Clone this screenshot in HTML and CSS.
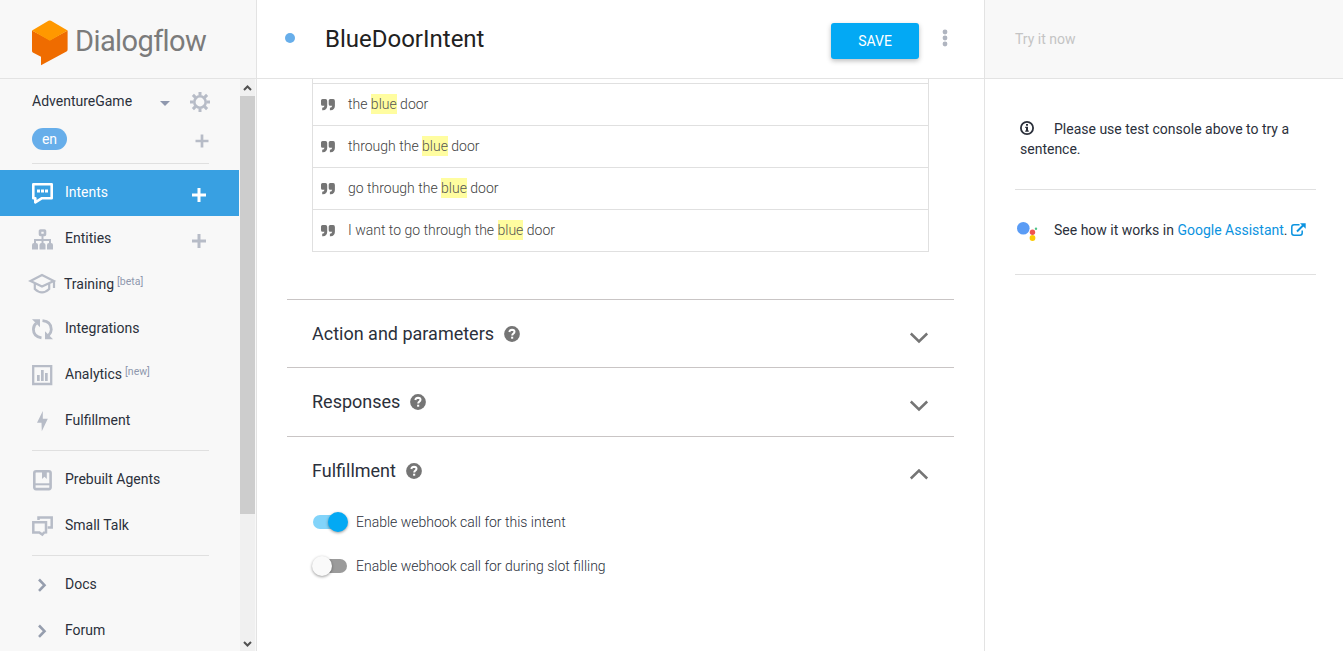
FILE: index.html
```html
<!DOCTYPE html>
<html lang="en">
<head>
<meta charset="utf-8">
<title>Dialogflow</title>
<link rel="stylesheet" href="styles.css">
</head>
<body>
<div class="app">
  <aside class="sidebar">
    <div class="brand">
      <svg class="brand-mark" width="36" height="46" viewBox="0 0 36 46"><path fill="#ef6c00" d="M0 10.5V31q0 1 .8 1.4L9 36.8V45.200L34.500 31.500Q35.600 30.800 35.600 29.500V10.500L18 20z"/><path fill="#ff9800" d="M0 10.500L16.500.8Q17.800.200 19 .8L35.600 10.500 17.800 20.700z"/></svg>
      <span class="brand-name">Dialogflow</span>
    </div>
    <div class="side-body">
      <div class="side-content">
        <div class="agent">
          <span class="agent-name">AdventureGame</span>
          <svg class="caret" width="10" height="5" viewBox="0 0 10 5"><path fill="#8f98ae" d="M0 0h10L5 5z"/></svg>
          <svg class="gear" width="20" height="20" viewBox="-10 -10 20 20" fill="none" stroke="#b7bcc7"><circle r="5.700" stroke-width="2.600"/><g stroke-width="3"><path d="M0-6.500V-10M0 6.500V10M-6.500 0H-10M6.500 0H10M-4.600-4.600l-2.500-2.500M4.600 4.600l2.500 2.500M-4.600 4.600l-2.500 2.500M4.600-4.600l2.500-2.500"/></g></svg>
        </div>
        <div class="lang">
          <span class="badge">en</span>
          <svg width="14" height="14" viewBox="0 0 14 14"><path d="M7 .5v13M.5 7h13" stroke="#b7bcc7" stroke-width="2.700"/></svg>
        </div>
        <hr>
        <nav>
          <a class="item active"><svg class="ico" viewBox="0 0 24 24"><path fill="none" stroke="#fff" stroke-width="2.600" stroke-linejoin="round" d="M3.300 3.300h18.400v13.900H12l-6.700 4.200v-4.200h-2z"/><path fill="#fff" d="M7 8.500h3v3H7zM11 8.500h3v3h-3zM15 8.500h3v3h-3z"/></svg><span>Intents</span><svg class="add" viewBox="0 0 14 14"><path d="M7 0v14M0 7h14"/></svg></a>
          <a class="item"><svg class="ico" viewBox="0 0 24 24"><path fill="none" stroke="#b7bcc7" stroke-width="2" d="M12.500 9v8M5 17v-4h15v4"/><rect x="10" y="3.500" width="5" height="4.500" rx=".5" fill="none" stroke="#b7bcc7" stroke-width="2.600"/><path fill="#b7bcc7" d="M2 18q0-2 2-2h2q2 0 2 2v4.500H2zM9.500 18q0-2 2-2h2q2 0 2 2v4.500h-6zM17 18q0-2 2-2h2q2 0 2 2v4.500h-6z"/></svg><span>Entities</span><svg class="add" viewBox="0 0 14 14"><path d="M7 0v14M0 7h14"/></svg></a>
          <a class="item training"><svg class="ico" viewBox="0 0 24 24" fill="none" stroke="#b7bcc7" stroke-width="2.200"><path d="M.5 9L12 3l11.800 6L12 14.500zM24 8.500v7.500M4.800 11.500V17Q12 23.800 19.200 17v-5.500"/></svg><span>Training<sup>[beta]</sup></span></a>
          <a class="item"><svg class="ico" viewBox="0 0 24 24"><path fill="none" stroke="#b7bcc7" stroke-width="2.800" d="M12.500 3.700Q21.300 4.500 21.300 12.500 21.200 16 18.500 18.500M11.500 20.800Q3.400 19.500 3.400 12.200 3.500 8.500 6.300 6.200"/><path fill="#b7bcc7" d="M2 2.200h8v8zM23 22.300h-8v-8z"/></svg><span>Integrations</span></a>
          <a class="item"><svg class="ico" viewBox="0 0 24 24"><path fill="none" stroke="#b7bcc7" stroke-width="2.300" d="M3.200 3.200h18v17.800h-18z"/><path fill="#b7bcc7" d="M7 12h2.700v6H7zM11 7h2.700v11H11zM15 10h2.700v8H15z"/></svg><span>Analytics<sup>[new]</sup></span></a>
          <a class="item"><svg class="ico" viewBox="0 0 24 24"><path fill="#b7bcc7" d="M12.800 2L7 13.800h4.500L11.800 22.200 17.800 9.800h-5z"/></svg><span>Fulfillment</span></a>
          <hr>
          <a class="item"><svg class="ico" viewBox="0 0 24 24"><rect x="4.300" y="3.300" width="16.300" height="17.800" rx="1.800" fill="none" stroke="#b7bcc7" stroke-width="2.600"/><path fill="none" stroke="#b7bcc7" stroke-width="2" d="M4.500 16.300h16"/><path fill="#b7bcc7" d="M12 3h4.800v8l-2.400-2.200L12 11z"/></svg><span>Prebuilt Agents</span></a>
          <a class="item"><svg class="ico" viewBox="0 0 24 24" fill="none" stroke="#b7bcc7" stroke-width="2.500"><path d="M8.500 6V3.400h13.200v10h-4M3.300 8.200H16v10.200l-2 .2-1.700 2-3-2.200h-6z"/></svg><span>Small Talk</span></a>
          <hr>
          <a class="item"><svg class="ico" viewBox="0 0 24 24"><path fill="none" stroke="#969eae" stroke-width="2.600" d="M9 6.500l5.500 5.700L9 17.900"/></svg><span>Docs</span></a>
          <a class="item"><svg class="ico" viewBox="0 0 24 24"><path fill="none" stroke="#969eae" stroke-width="2.600" d="M9 6.500l5.500 5.700L9 17.900"/></svg><span>Forum</span></a>
        </nav>
      </div>
      <div class="scrollbar">
        <svg width="15" height="17" viewBox="0 0 15 17"><path fill="none" stroke="#505050" stroke-width="2" d="M4 11l3.500-3.500L11 11"/></svg>
        <div class="thumb"></div>
        <svg class="down" width="15" height="17" viewBox="0 0 15 17"><path fill="none" stroke="#505050" stroke-width="2" d="M4 8l3.500 3.500L11 8"/></svg>
      </div>
    </div>
  </aside>

  <main class="main">
    <header class="main-head">
      <span class="dot"></span>
      <h1>BlueDoorIntent</h1>
      <button class="save">SAVE</button>
      <svg class="more" width="6" height="18" viewBox="0 0 6 18" fill="#b0b5c0"><circle cx="3" cy="3" r="2.400"/><circle cx="3" cy="9" r="2.400"/><circle cx="3" cy="15" r="2.400"/></svg>
    </header>
    <div class="phrases">
      <div class="phrase"><svg class="quote" viewBox="0 0 14 12"><path d="M0 1.500Q0 0 1.500 0h3Q6.200 0 6.200 2v5Q6 11 2 11.300H1.200V8.800q2-.2 2.300-2H1.500Q0 6.800 0 5.300zM7.700 1.500Q7.700 0 9.200 0h3Q13.900 0 13.900 2v5q-.2 4-4.200 4.300H8.900V8.800q2-.2 2.300-2h-2q-1.500 0-1.500-1.500z"/></svg><p>the <mark>blue</mark> door</p></div>
      <div class="phrase"><svg class="quote" viewBox="0 0 14 12"><path d="M0 1.500Q0 0 1.500 0h3Q6.200 0 6.200 2v5Q6 11 2 11.300H1.200V8.800q2-.2 2.300-2H1.500Q0 6.800 0 5.300zM7.700 1.500Q7.700 0 9.200 0h3Q13.900 0 13.900 2v5q-.2 4-4.200 4.300H8.900V8.800q2-.2 2.300-2h-2q-1.500 0-1.500-1.500z"/></svg><p>through the <mark>blue</mark> door</p></div>
      <div class="phrase"><svg class="quote" viewBox="0 0 14 12"><path d="M0 1.500Q0 0 1.500 0h3Q6.200 0 6.200 2v5Q6 11 2 11.300H1.200V8.800q2-.2 2.300-2H1.500Q0 6.800 0 5.300zM7.700 1.500Q7.700 0 9.200 0h3Q13.900 0 13.900 2v5q-.2 4-4.200 4.300H8.900V8.800q2-.2 2.300-2h-2q-1.500 0-1.500-1.500z"/></svg><p>go through the <mark>blue</mark> door</p></div>
      <div class="phrase"><svg class="quote" viewBox="0 0 14 12"><path d="M0 1.500Q0 0 1.500 0h3Q6.200 0 6.200 2v5Q6 11 2 11.300H1.200V8.800q2-.2 2.300-2H1.500Q0 6.800 0 5.300zM7.700 1.500Q7.700 0 9.200 0h3Q13.900 0 13.900 2v5q-.2 4-4.200 4.300H8.900V8.800q2-.2 2.300-2h-2q-1.500 0-1.500-1.500z"/></svg><p>I want to go through the <mark>blue</mark> door</p></div>
    </div>
    <section class="panel first">
      <h2>Action and parameters</h2><svg class="help" viewBox="0 0 16 16"><circle cx="8" cy="8" r="7.900" fill="#757575"/><path fill="none" stroke="#fff" stroke-width="2" d="M5.300 6Q5.800 3.800 8 3.800q2.500.1 2.500 2 0 1.100-1.200 1.900Q8.200 8.300 8.200 9.600"/><path fill="#fff" d="M7.100 10.700h2.100v2H7.100z"/></svg>
      <svg class="chev" viewBox="0 0 20 12"><path d="M1.800 1.500L10 9.500l8.200-8"/></svg>
    </section>
    <section class="panel">
      <h2>Responses</h2><svg class="help" viewBox="0 0 16 16"><circle cx="8" cy="8" r="7.900" fill="#757575"/><path fill="none" stroke="#fff" stroke-width="2" d="M5.300 6Q5.800 3.800 8 3.800q2.500.1 2.500 2 0 1.100-1.200 1.900Q8.200 8.300 8.200 9.600"/><path fill="#fff" d="M7.100 10.700h2.100v2H7.100z"/></svg>
      <svg class="chev" viewBox="0 0 20 12"><path d="M1.800 1.500L10 9.500l8.200-8"/></svg>
    </section>
    <section class="panel">
      <h2>Fulfillment</h2><svg class="help" viewBox="0 0 16 16"><circle cx="8" cy="8" r="7.900" fill="#757575"/><path fill="none" stroke="#fff" stroke-width="2" d="M5.300 6Q5.800 3.800 8 3.800q2.500.1 2.500 2 0 1.100-1.200 1.900Q8.200 8.300 8.200 9.600"/><path fill="#fff" d="M7.100 10.700h2.100v2H7.100z"/></svg>
      <svg class="chev" viewBox="0 0 20 12"><path d="M1.800 9.500L10 1.500l8.200 8"/></svg>
    </section>
    <div class="switches">
      <label class="switch on"><span class="track"><span class="knob"></span></span>Enable webhook call for this intent</label>
      <label class="switch"><span class="track"><span class="knob"></span></span>Enable webhook call for during slot filling</label>
    </div>
  </main>

  <aside class="console">
    <header class="console-head">Try it now</header>
    <div class="note">
      <p><svg class="info" width="14" height="14" viewBox="0 0 14 14"><circle cx="7" cy="7" r="6.100" fill="none" stroke="#2b303b" stroke-width="1.800"/><path fill="#2b303b" d="M6 3h2v1.700H6zM5.200 5.700H8v3.800h.8v1.200H5.200V9.500H6V7h-.8z"/></svg>Please use test console above to try a sentence.</p>
    </div>
    <div class="assistant">
      <svg width="22" height="20" viewBox="0 0 22 20"><circle cx="6.300" cy="6.300" r="6.300" fill="#5a9cf5"/><circle cx="15.500" cy="10.200" r="2.700" fill="#ef5350"/><circle cx="15.500" cy="16" r="2.900" fill="#fbcb05"/><circle cx="19" cy="6.800" r="1.200" fill="#4fc38a"/></svg>
      <p>See how it works in <a>Google Assistant</a>. <svg class="ext" width="15" height="13" viewBox="0 0 15 13"><path fill="none" stroke="#0b93e0" stroke-width="1.500" d="M8.500 1.800H3Q.8 1.800.8 4v6Q.8 12.200 3 12.200h6q2.200 0 2.200-2.200V7.500"/><path fill="none" stroke="#0b93e0" stroke-width="2" d="M6 8.500l6.500-6.500"/><path fill="#0b93e0" d="M9 .2h5.700v5.600z"/></svg></p>
    </div>
  </aside>
</div>
</body>
</html>
```
FILE: styles.css
```css
* { box-sizing: border-box; }
body { margin: 0; font: 14px/20px Roboto, "Liberation Sans", sans-serif; color: #2b303b; background: #fff; overflow: hidden; }
h1, h2, p { margin: 0; font-weight: 400; }
svg { flex: none; display: block; }
hr { border: 0; height: 1px; background: #e0e0e0; margin: 6px 31px 6px 32px; }
.app { display: grid; grid-template-columns: 257px 728px 358px; height: 651px; }

/* Sidebar */
.sidebar { display: flex; flex-direction: column; height: 651px; background: #f8f8f8; border-right: 1px solid #e3e3e3; overflow: hidden; }
.brand { display: flex; flex: none; align-items: flex-start; height: 79px; padding: 20px 0 0 32px; border-bottom: 1px solid #e3e3e3; }
.brand-name { margin: 3px 0 0 7px; font: 400 29px/36px Roboto, sans-serif; letter-spacing: -.6px; color: #7b7b7b; }
.side-body { display: flex; height: 572px; }
.side-content { width: 240px; height: 572px; overflow: hidden; }
.agent { display: flex; align-items: center; height: 46px; padding: 0 30px 0 32px; }
.agent-name { width: 128px; padding-bottom: 2px; }
.caret { margin-top: 3px; }
.gear { margin-left: auto; }
.lang { display: flex; align-items: center; justify-content: space-between; height: 32px; padding: 0 31px 4px 32px; }
.lang svg { margin-top: 4px; }
.badge { width: 35px; height: 22px; border-radius: 11px; background: #67aeea; color: #fff; line-height: 22px; text-align: center; }
.item { display: flex; align-items: center; height: 46px; padding: 0 34px 0 30px; }
.item span { padding: 0 0 2px 11px; }
.item.active { width: 239px; background: #38a0e2; color: #fff; padding-right: 33px; }
.training { height: 44px; }
.training span { padding: 0 0 0 10px; }
.ico { width: 24px; height: 24px; overflow: visible; }
.add { width: 14px; height: 14px; margin: 3px 0 0 auto; stroke: #b7bcc7; stroke-width: 3; }
.active .add { stroke: #fff; }
sup { margin-left: 3px; font-size: 10.500px; line-height: 0; vertical-align: 4px; color: #8f98ae; }
.scrollbar { display: flex; flex-direction: column; width: 15px; height: 572px; background: #f0f0f0; }
.thumb { height: 418px; background: #cdcdcd; }
.down { margin-top: auto; }
nav { margin-top: -.01px; }

/* Intent editor */
.main { border-right: 1px solid #e3e3e3; }
.main-head { display: flex; height: 79px; padding-left: 28px; border-bottom: 1px solid #e3e3e3; }
.dot { width: 10px; height: 10px; margin: 33px 30px 0 0; border-radius: 50%; background: #67aeea; }
h1 { padding-top: 24px; font-size: 24px; line-height: 30px; color: #212121; }
.save { width: 88px; height: 36px; margin: 23px 23px 0 auto; padding: 0; border: 0; border-radius: 3px; background: #03a9f4; color: #fff; font: 14px/36px Roboto, sans-serif; box-shadow: 0 2px 5px rgba(0,0,0,.26); }
.more { margin: 29px 36px 0 0; }
.phrases { margin: 0 55px 0 55px; padding-top: 4px; border: 1px solid #e0e0e0; border-top: 0; }
.phrase { display: flex; align-items: center; height: 42px; padding: 0 8px; border-top: 1px solid #e0e0e0; }
.quote { width: 14px; height: 12px; margin-right: 13px; fill: #757575; }
.phrase p { font-weight: 300; color: #424242; padding-bottom: 1px; }
mark { padding: 2px 0; background: #fffda0; color: #555; }
.panel { display: flex; align-items: center; height: 68px; margin: 0 30px; padding: 0 25px 0 25px; border-top: 1px solid #c9c5c5; }
.panel.first { margin-top: 47px; }
.panel + .panel { height: 69px; }
h2 { font-size: 18px; line-height: 24px; }
.help { width: 16px; height: 16px; margin-left: 10px; }
.chev { width: 20px; height: 12px; margin: 8px 0 0 auto; fill: none; stroke: #757575; stroke-width: 2.500; }
.switches { display: flex; flex-direction: column; gap: 24px; padding: 7px 0 0 56px; }
.switch { display: flex; align-items: center; height: 20px; font-weight: 300; }
.track { display: flex; align-items: center; width: 34px; height: 14px; margin-right: 9px; border-radius: 7px; background: #9b9b9b; }
.knob { width: 20px; height: 20px; margin-left: -1px; flex: none; border-radius: 50%; background: #fafafa; box-shadow: 0 1px 3px rgba(0,0,0,.4); }
.on .track { background: #82d4fa; justify-content: flex-end; }
.on .knob { margin-right: -1px; background: #03a9f4; }

/* Test console */
.console-head { height: 79px; padding: 29px 0 0 30px; border-bottom: 1px solid #e3e3e3; background: #f8f8f8; color: #c4c4c4; }
.note { height: 111px; margin: 0 27px 0 30px; padding: 40px 5px 0; border-bottom: 1px solid #e0e0e0; }
.info { display: inline-block; margin-right: 20px; vertical-align: -1px; }
.assistant { display: flex; height: 85px; margin: 0 27px 0 30px; padding: 30px 0 0 2px; border-bottom: 1px solid #e0e0e0; }
.assistant > svg { margin: 2px 15px 0 0; }
.assistant a { color: #0b93e0; }
.ext { display: inline-block; vertical-align: -1px; }
```
